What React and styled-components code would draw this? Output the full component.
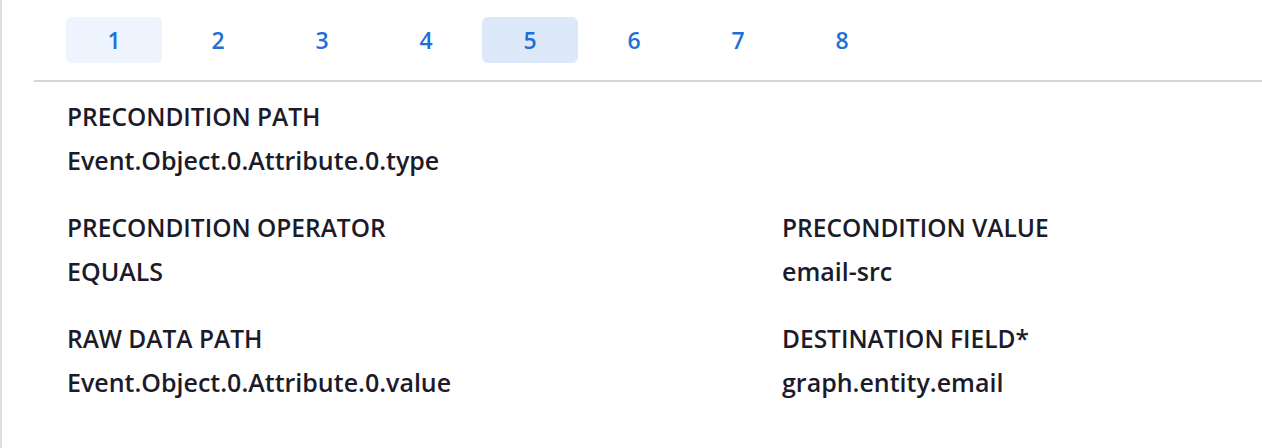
import styled, { createGlobalStyle } from "styled-components";

const GlobalStyle = createGlobalStyle`
  html, body {
    margin: 0;
    padding: 0;
    background: #ffffff;
  }
  body {
    font-family: "Open Sans", "Noto Sans", sans-serif;
  }
`;

const Panel = styled.div`
  width: 1262px;
  height: 448px;
  box-sizing: border-box;
  border-left: 2px solid #dedede;
  background: #ffffff;
`;

const TabBar = styled.div`
  display: flex;
  gap: 8px;
  margin-left: 32px;
  padding: 17px 0 17px 32px;
  border-bottom: 2px solid #d6d6d6;
`;

const Tab = styled.button`
  width: 96px;
  height: 46px;
  padding: 0;
  border: none;
  border-radius: 6px;
  background: ${(p) => p.$bg || "transparent"};
  color: #1f6fd8;
  font-family: inherit;
  font-size: 23px;
  font-weight: 600;
  cursor: pointer;
`;

const Fields = styled.div`
  display: grid;
  grid-template-columns: 715px 1fr;
  row-gap: 34px;
  padding: 18px 0 0 65px;
`;

const Field = styled.div`
  display: flex;
  flex-direction: column;
  gap: 9px;
  grid-column: ${(p) => (p.$full ? "1 / -1" : "auto")};
`;

const Label = styled.div`
  font-size: 24.5px;
  font-weight: 600;
  color: #1b1b2a;
  text-transform: uppercase;
  line-height: 34px;
  white-space: nowrap;
`;

const Value = styled.div`
  font-size: 25px;
  font-weight: 600;
  color: #1b1b2a;
  line-height: 34px;
  white-space: nowrap;
`;

const tabs = [1, 2, 3, 4, 5, 6, 7, 8];

const fields = [
  { label: "Precondition Path", value: "Event.Object.0.Attribute.0.type", full: true },
  { label: "Precondition Operator", value: "EQUALS" },
  { label: "Precondition Value", value: "email-src" },
  { label: "Raw Data Path", value: "Event.Object.0.Attribute.0.value" },
  { label: "Destination Field*", value: "graph.entity.email" },
];

export default function App() {
  return (
    <>
      <GlobalStyle />
      <Panel>
        <TabBar>
          {tabs.map((n) => (
            <Tab key={n} $bg={n === 1 ? "#eef4fd" : n === 5 ? "#dde8f9" : undefined}>
              {n}
            </Tab>
          ))}
        </TabBar>
        <Fields>
          {fields.map((f) => (
            <Field key={f.label} $full={f.full}>
              <Label>{f.label}</Label>
              <Value>{f.value}</Value>
            </Field>
          ))}
        </Fields>
      </Panel>
    </>
  );
}
